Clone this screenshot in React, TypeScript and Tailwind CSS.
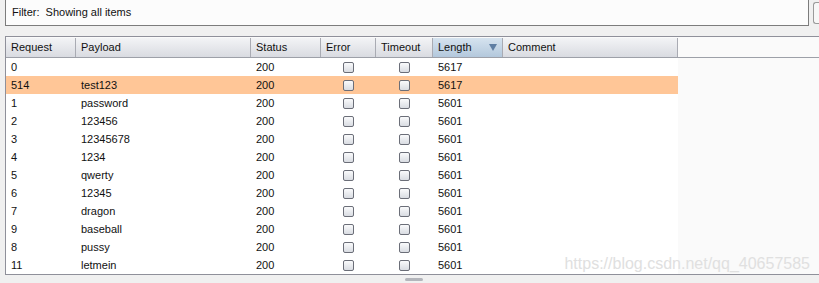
const rows = [
  ["0", "", "200", "5617"],
  ["514", "test123", "200", "5617"],
  ["1", "password", "200", "5601"],
  ["2", "123456", "200", "5601"],
  ["3", "12345678", "200", "5601"],
  ["4", "1234", "200", "5601"],
  ["5", "qwerty", "200", "5601"],
  ["6", "12345", "200", "5601"],
  ["7", "dragon", "200", "5601"],
  ["9", "baseball", "200", "5601"],
  ["8", "pussy", "200", "5601"],
  ["11", "letmein", "200", "5601"],
];

const cols = "grid grid-cols-[70px_175px_70px_55px_57px_70px_175px]";

const Box = () => (
  <div className="flex justify-center">
    <div className="h-[11px] w-[11px] rounded-[2px] border border-[#6b6e78] bg-gradient-to-b from-[#fafbfc] to-[#d9dce2]" />
  </div>
);

const Head = ({ label, sorted }: { label: string; sorted?: boolean }) => (
  <div
    className={
      "flex items-center justify-between border-r border-[#a9abb3] pl-[5px] pr-[5px] " +
      (sorted
        ? "bg-gradient-to-b from-[#d6e3ef] to-[#b3c8dc]"
        : "bg-gradient-to-b from-[#f3f4f6] to-[#d9dbe1]")
    }
  >
    <span>{label}</span>
    {sorted && (
      <svg width="8" height="7" viewBox="0 0 8 7">
        <path d="M0 0H8L4 7Z" fill="#5f7ea3" />
      </svg>
    )}
  </div>
);

export default function App() {
  return (
    <div className="relative h-[283px] w-[819px] overflow-hidden bg-[#f0f0f0] font-['Liberation_Sans',Arial,sans-serif] text-[11px] text-[#111]">
      <div className="flex h-[26px]">
        <div className="w-[5px]" />
        <div className="flex w-[807px] items-center border-x border-b border-[#7c7c7c] bg-[#fcfcfc] pl-[6px]">
          Filter:&nbsp;&nbsp;Showing all items
        </div>
        <div className="ml-[4px] mt-[2px] h-[22px] w-[6px] rounded-l-[3px] border-y border-l border-[#9a9a9a] bg-[#f7f7f7]" />
      </div>
      <div className="ml-[5px] mt-[10px] flex h-[239px] flex-col border-y border-l border-[#8f909a] bg-[#fafafa]">
        <div className="flex h-[21px] border-b border-[#9da0a8]">
          <div className={cols + " h-full pt-[1px]"}>
            <Head label="Request" />
            <Head label="Payload" />
            <Head label="Status" />
            <Head label="Error" />
            <Head label="Timeout" />
            <Head label="Length" sorted />
            <Head label="Comment" />
          </div>
        </div>
        <div className="w-[672px] flex-1 bg-white">
          {rows.map((r, i) => (
            <div
              key={i}
              className={cols + " h-[18px] items-center " + (i === 1 ? "bg-[#ffc697]" : "")}
            >
              <div className="pl-[5px] pt-[1px]">{r[0]}</div>
              <div className="pl-[5px] pt-[1px]">{r[1]}</div>
              <div className="pl-[5px] pt-[1px]">{r[2]}</div>
              <Box />
              <Box />
              <div className="pl-[5px] pt-[1px]">{r[3]}</div>
              <div />
            </div>
          ))}
        </div>
      </div>
      <div className="flex h-[9px] justify-center">
        <div className="ml-[8px] mt-[3px] h-[3px] w-[18px] rounded-[2px] bg-[#b3b5bb]" />
      </div>
      <div className="absolute bottom-[7px] right-[9px] text-[16px] text-[#e0e0e0]">
        https://blog.csdn.net/qq_40657585
      </div>
    </div>
  );
}
